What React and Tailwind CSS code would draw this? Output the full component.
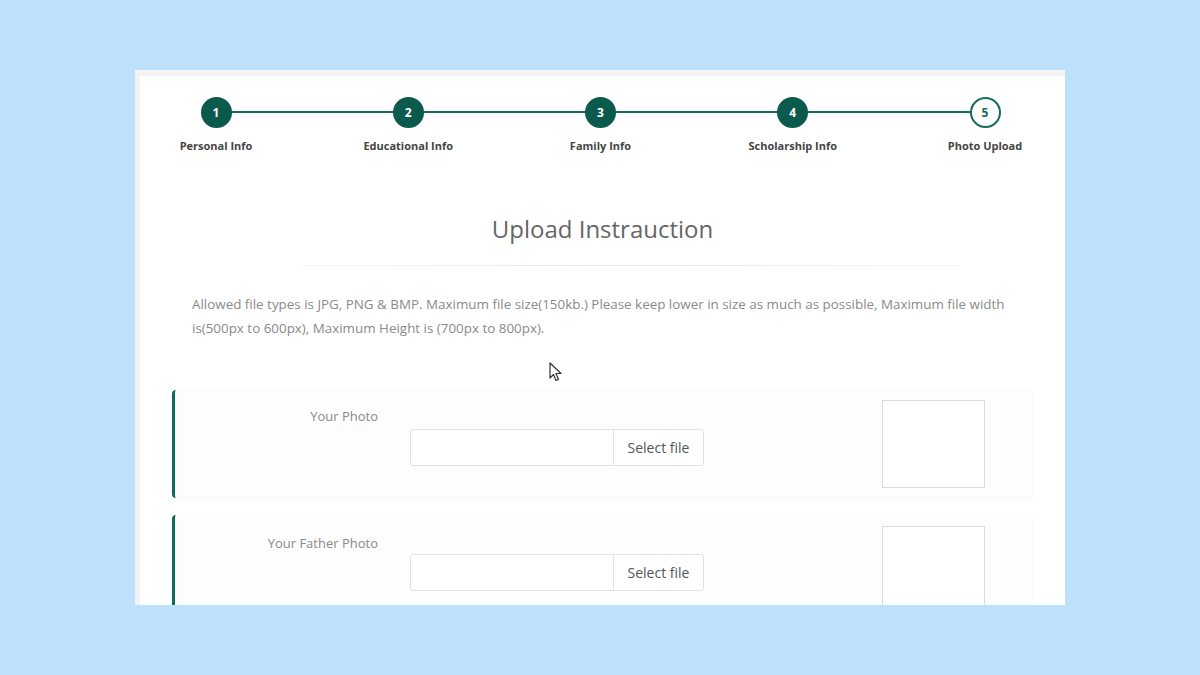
import React from "react";

const steps = [
  { n: 1, label: "Personal Info", done: true },
  { n: 2, label: "Educational Info", done: true },
  { n: 3, label: "Family Info", done: true },
  { n: 4, label: "Scholarship Info", done: true },
  { n: 5, label: "Photo Upload", done: false },
];

function UploadCard({ label, labelTop, previewTop }) {
  return (
    <div className="flex h-[108px] w-[860px] rounded-l-[4px] border-l-[3px] border-[#0e6b5a] bg-[#fdfdfd] shadow-[0_1px_4px_rgba(0,0,0,0.04)]">
      <div className="w-[203px] shrink-0 text-right text-[13px] text-[#8a8a8a]" style={{ paddingTop: labelTop }}>
        {label}
      </div>
      <div className="ml-[32px] mt-[39px] flex h-[37px] w-[294px] shrink-0 rounded-[3px] border border-[#e2e2e2] bg-white">
        <div className="flex-1" />
        <div className="flex w-[90px] items-center justify-center border-l border-[#e2e2e2] text-[14px] text-[#555]">
          Select file
        </div>
      </div>
      <div className="ml-[178px] h-[88px] w-[103px] shrink-0 border border-[#dcdcdc] bg-white" style={{ marginTop: previewTop }} />
    </div>
  );
}

export default function App() {
  return (
    <div className="h-[675px] w-[1200px] overflow-hidden bg-[#bde0fb] pt-[70px] pl-[135px]" style={{ fontFamily: '"Open Sans", "Noto Sans", sans-serif' }}>
      <div className="h-[535px] w-[930px] overflow-hidden bg-[#f3f3f3] pl-[5px] pt-[6px]">
        <div className="relative h-full w-full bg-white pt-[21px]">
          {/* stepper */}
          <div className="relative ml-[36px] flex w-[849px] justify-between">
            <div className="absolute left-[40px] right-[40px] top-[14px] h-[2px] bg-[#176b5b]" />
            {steps.map((s) => (
              <div key={s.n} className="relative flex w-[80px] flex-col items-center">
                <div
                  className={
                    s.done
                      ? "flex h-[31px] w-[31px] items-center justify-center rounded-full bg-[#0b5a4d] text-[12px] font-bold text-white"
                      : "flex h-[31px] w-[31px] items-center justify-center rounded-full border-2 border-[#176b5b] bg-white text-[12px] font-bold text-[#176b5b]"
                  }
                >
                  {s.n}
                </div>
                <div className="mt-[10px] whitespace-nowrap text-[11px] font-bold text-[#444]">{s.label}</div>
              </div>
            ))}
          </div>

          {/* heading */}
          <div className="mt-[56px] text-center text-[24px] text-[#666]">Upload Instrauction</div>
          <div className="ml-[160px] mt-[18px] h-px w-[660px] bg-gradient-to-r from-[#f6f6f6] via-[#e6e6e6] to-[#f6f6f6]" />

          <p className="ml-[52px] mt-[26px] w-[850px] text-[13.4px] leading-[24px] text-[#8a8a8a]">
            Allowed file types is JPG, PNG &amp; BMP. Maximum file size(150kb.) Please keep lower in size as much as possible, Maximum file width is(500px to 600px), Maximum Height is (700px to 800px).
          </p>

          {/* cursor */}
          <svg className="absolute left-[409px] top-[286px] z-10" width="14" height="21" viewBox="0 0 14 21">
            <path d="M1 1 L1 16 L4.5 12.5 L7 18.5 L9.5 17.5 L7 11.5 L12 11.5 Z" fill="white" stroke="#333" strokeWidth="1.2" strokeLinejoin="round" />
          </svg>

          <div className="ml-[32px] mt-[50px] flex flex-col gap-[17px]">
            <UploadCard label="Your Photo" labelTop="17px" previewTop="10px" />
            <UploadCard label="Your Father Photo" labelTop="19px" previewTop="11px" />
          </div>
        </div>
      </div>
    </div>
  );
}
